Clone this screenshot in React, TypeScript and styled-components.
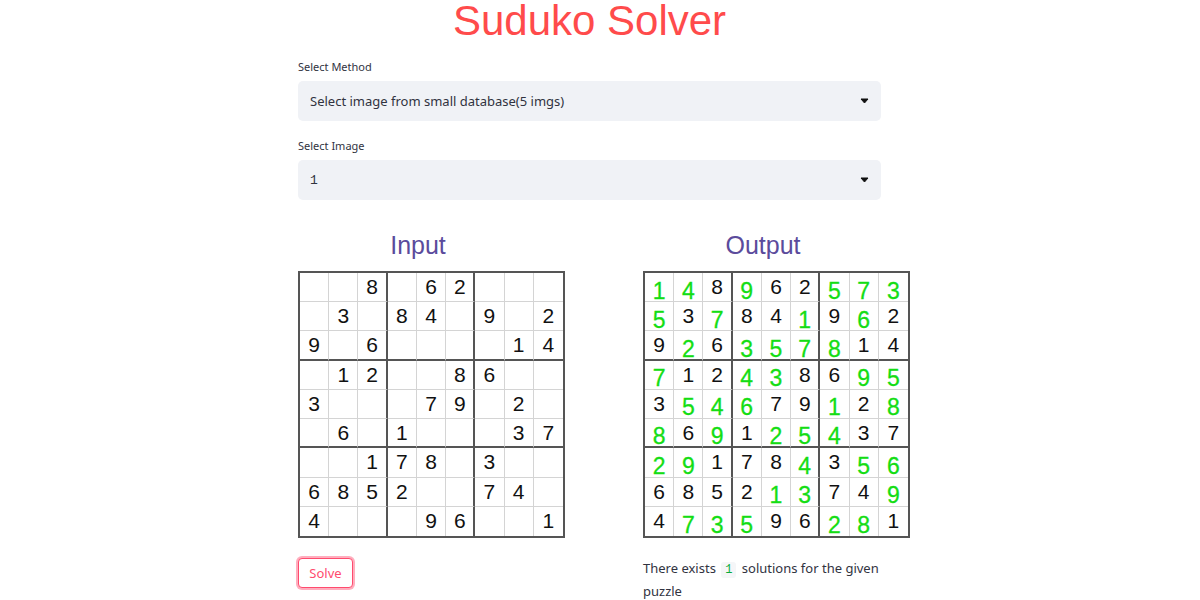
import React from 'react';
import styled, { createGlobalStyle } from 'styled-components';

const GlobalStyle = createGlobalStyle`
  html, body {
    margin: 0;
    padding: 0;
    background: #fff;
  }
  body {
    font-family: "Noto Sans", "Open Sans", sans-serif;
    color: #31333f;
  }
`;

const PUZZLE = [
  '008062000',
  '030840902',
  '906000014',
  '012008600',
  '300079020',
  '060100037',
  '001780300',
  '685200740',
  '400096001',
];

const SOLUTION = [
  '148962573',
  '537841962',
  '926357814',
  '712438695',
  '354679128',
  '869125437',
  '291784356',
  '685213749',
  '473596281',
];

const Caret = () => (
  <svg width="9" height="6" viewBox="0 0 9 6">
    <path d="M1 1 L8 1 L4.5 5 Z" fill="#111" stroke="#111" strokeWidth="1" strokeLinejoin="round" />
  </svg>
);

type BoardProps = {
  solved?: boolean;
};

const Board = ({ solved }: BoardProps) => (
  <Grid>
    {PUZZLE.map((row, r) =>
      row.split('').map((given, c) => {
        const value = solved ? SOLUTION[r][c] : given;
        const isNew = solved && given === '0';
        return (
          <Cell key={`${r}-${c}`} $col={c} $row={r}>
            {value !== '0' && <Digit $filled={isNew}>{value}</Digit>}
          </Cell>
        );
      })
    )}
  </Grid>
);

const App = () => (
  <Page>
    <GlobalStyle />
    <Main>
      <Title>Suduko Solver</Title>

      <Label>Select Method</Label>
      <Select>
        <SelectValue>Select image from small database(5 imgs)</SelectValue>
        <Caret />
      </Select>

      <Label>Select Image</Label>
      <Select>
        <SelectValue $mono>1</SelectValue>
        <Caret />
      </Select>

      <Columns>
        <Column>
          <BoardTitle>Input</BoardTitle>
          <Board />
          <SolveButton>Solve</SolveButton>
        </Column>
        <Column>
          <BoardTitle>Output</BoardTitle>
          <Board solved />
          <Result>
            There exists <Code>1</Code> solutions for the given puzzle
          </Result>
        </Column>
      </Columns>
    </Main>
  </Page>
);

const Page = styled.div`
  padding-left: 298px;
  min-height: 600px;
`;

const Main = styled.div`
  width: 583px;
`;

const Title = styled.h1`
  margin: 0;
  font-family: "Liberation Sans", Arial, sans-serif;
  font-size: 42px;
  line-height: 42px;
  font-weight: 400;
  color: #ff4b4b;
  text-align: center;
`;

const Label = styled.div`
  margin-top: 18px;
  font-size: 11px;
  line-height: 14px;
  color: #31333f;
`;

const Select = styled.div`
  margin-top: 7px;
  height: 40px;
  box-sizing: border-box;
  display: flex;
  align-items: center;
  justify-content: space-between;
  padding: 0 12px 0 12px;
  background: #f0f2f6;
  border-radius: 5px;
`;

const SelectValue = styled.span<{ $mono?: boolean }>`
  font-family: ${({ $mono }) => ($mono ? '"Liberation Mono", monospace' : '"Noto Sans", sans-serif')};
  font-size: 13px;
  color: #31333f;
`;

const Columns = styled.div`
  display: grid;
  grid-template-columns: 267px 267px;
  column-gap: 78px;
  margin-top: 30px;
`;

const Column = styled.div`
  display: flex;
  flex-direction: column;
  align-items: flex-start;
`;

const BoardTitle = styled.div`
  width: 240px;
  text-align: center;
  font-family: "Liberation Sans", Arial, sans-serif;
  font-size: 25px;
  line-height: 30px;
  color: #5b4b9c;
  margin-bottom: 11px;
`;

const Grid = styled.div`
  display: grid;
  grid-template-columns: repeat(9, minmax(0, 1fr));
  grid-template-rows: repeat(9, minmax(0, 1fr));
  width: 267px;
  height: 267px;
  box-sizing: border-box;
  border: 2px solid #555;
`;

const Cell = styled.div<{ $col: number; $row: number }>`
  display: flex;
  align-items: center;
  justify-content: center;
  box-sizing: border-box;
  border-right: ${({ $col }) => ($col === 8 ? 'none' : $col % 3 === 2 ? '2px solid #555' : '1px solid #d4d4d4')};
  border-bottom: ${({ $row }) => ($row === 8 ? 'none' : $row % 3 === 2 ? '2px solid #555' : '1px solid #d4d4d4')};
`;

const Digit = styled.span<{ $filled?: boolean }>`
  font-family: "Liberation Sans", Arial, sans-serif;
  font-size: ${({ $filled }) => ($filled ? '23px' : '21px')};
  line-height: 20px;
  color: ${({ $filled }) => ($filled ? '#14dd14' : '#111')};
  -webkit-text-stroke: ${({ $filled }) => ($filled ? '0.3px #14dd14' : '0')};
  margin-top: ${({ $filled }) => ($filled ? '7px' : '0')};
`;

const SolveButton = styled.button`
  margin-top: 20px;
  width: 55px;
  height: 30px;
  padding: 0;
  background: #fff;
  border: 1px solid #ff4b6e;
  border-radius: 4px;
  box-shadow: 0 0 0 2px rgba(255, 75, 110, 0.45);
  font-family: "Noto Sans", sans-serif;
  font-size: 13px;
  color: #ff4b6e;
  cursor: pointer;
`;

const Result = styled.p`
  margin: 20px 0 0;
  width: 250px;
  font-size: 13px;
  line-height: 21px;
  color: #31333f;
`;

const Code = styled.code`
  font-family: "Liberation Mono", monospace;
  font-size: 12px;
  color: #09ab3b;
  background: #f5f6f8;
  border-radius: 3px;
  padding: 1px 4px;
  margin: 0 2px;
`;

export default App;
